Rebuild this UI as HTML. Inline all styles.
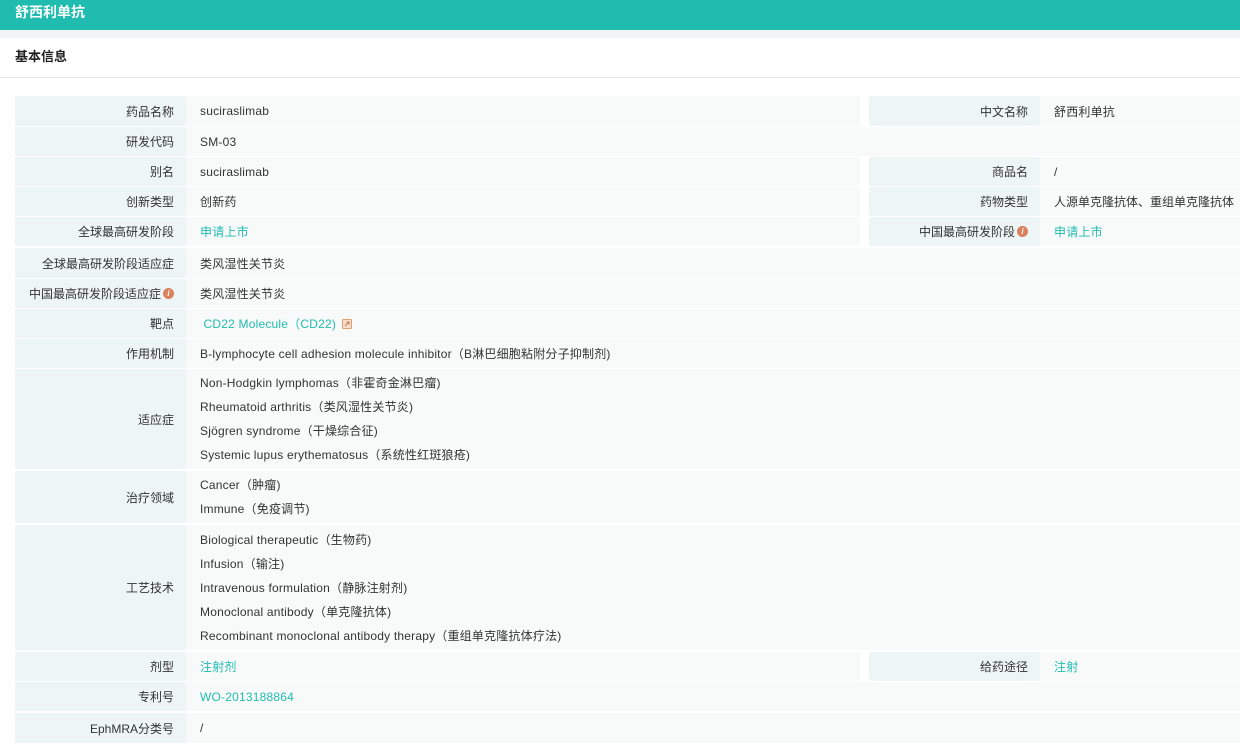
<!DOCTYPE html>
<html><head><meta charset="utf-8"><style>
*{margin:0;padding:0;box-sizing:border-box}
body{width:1240px;height:745px;overflow:hidden;background:#fff;font-family:"Liberation Sans","Noto Sans CJK SC",sans-serif;font-size:12px;color:#333;position:relative}
.top{position:absolute;left:0;top:0;width:1240px;height:30px;background:#20bcb0;color:#fff;font-weight:bold;font-size:14px;line-height:25px;padding-left:15px}
.strip{position:absolute;left:0;top:30px;width:1240px;height:8px;background:#f3f4f6}
.sec{position:absolute;left:0;top:38px;width:1240px;height:40px;border-bottom:1px solid #e8e8e8;font-weight:bold;font-size:13px;line-height:38px;padding-left:15px;color:#222}
.l{position:absolute;background:#eef5f5;text-align:right;padding-right:12px;display:flex;align-items:center;justify-content:flex-end;border-radius:2px;color:#333}
.v{position:absolute;background:#f8fafa;padding-left:14px;color:#333;letter-spacing:0.2px}
.v.c{display:flex;align-items:center}
.v.m{display:flex;flex-direction:column;justify-content:center}
.v.m div{height:24px;line-height:24px}
.a{color:#20bcb0}
.i{display:inline-block;width:11px;height:11px;border-radius:50%;background:#d9825f;color:#fff;font-size:8px;line-height:11px;text-align:center;font-style:italic;margin-left:2px;font-weight:bold;letter-spacing:0}
.ext{display:inline-block;margin-left:6px;vertical-align:middle}
</style></head><body>
<div class="top">舒西利单抗</div>
<div class="strip"></div>
<div class="sec">基本信息</div>

<div class="l" style="left:15px;top:96px;width:171px;height:30px">药品名称</div>
<div class="v c" style="left:186px;top:96px;width:674px;height:30px">suciraslimab</div>
<div class="l" style="left:869px;top:96px;width:171px;height:30px">中文名称</div>
<div class="v c" style="left:1040px;top:96px;width:200px;height:30px">舒西利单抗</div>

<div class="l" style="left:15px;top:127px;width:171px;height:29px">研发代码</div>
<div class="v c" style="left:186px;top:127px;width:1054px;height:29px">SM-03</div>

<div class="l" style="left:15px;top:157px;width:171px;height:29px">别名</div>
<div class="v c" style="left:186px;top:157px;width:674px;height:29px">suciraslimab</div>
<div class="l" style="left:869px;top:157px;width:171px;height:29px">商品名</div>
<div class="v c" style="left:1040px;top:157px;width:200px;height:29px">/</div>

<div class="l" style="left:15px;top:187px;width:171px;height:29px">创新类型</div>
<div class="v c" style="left:186px;top:187px;width:674px;height:29px">创新药</div>
<div class="l" style="left:869px;top:187px;width:171px;height:29px">药物类型</div>
<div class="v c" style="left:1040px;top:187px;width:200px;height:29px;letter-spacing:0">人源单克隆抗体、重组单克隆抗体</div>

<div class="l" style="left:15px;top:217px;width:171px;height:29px">全球最高研发阶段</div>
<div class="v c a" style="left:186px;top:217px;width:674px;height:29px">申请上市</div>
<div class="l" style="left:869px;top:217px;width:171px;height:29px">中国最高研发阶段<span class="i">i</span></div>
<div class="v c a" style="left:1040px;top:217px;width:200px;height:29px">申请上市</div>

<div class="l" style="left:15px;top:248px;width:171px;height:30px">全球最高研发阶段适应症</div>
<div class="v c" style="left:186px;top:248px;width:1054px;height:30px">类风湿性关节炎</div>

<div class="l" style="left:15px;top:279px;width:171px;height:29px">中国最高研发阶段适应症<span class="i">i</span></div>
<div class="v c" style="left:186px;top:279px;width:1054px;height:29px">类风湿性关节炎</div>

<div class="l" style="left:15px;top:309px;width:171px;height:29px">靶点</div>
<div class="v c" style="left:186px;top:309px;width:1054px;height:29px"><span class="a">&nbsp;CD22 Molecule（CD22)</span><svg class="ext" width="10" height="10" viewBox="0 0 10 10"><rect x="0.5" y="0.5" width="9" height="9" rx="1" fill="#f6dccb" stroke="#e0a070"/><path d="M3 7L7 3M4.5 3H7V5.5" stroke="#c8784a" stroke-width="1" fill="none"/></svg></div>

<div class="l" style="left:15px;top:339px;width:171px;height:29px">作用机制</div>
<div class="v c" style="left:186px;top:339px;width:1054px;height:29px">B-lymphocyte cell adhesion molecule inhibitor（B淋巴细胞粘附分子抑制剂)</div>

<div class="l" style="left:15px;top:369px;width:171px;height:100px">适应症</div>
<div class="v m" style="left:186px;top:369px;width:1054px;height:100px"><div>Non-Hodgkin lymphomas（非霍奇金淋巴瘤)</div><div>Rheumatoid arthritis（类风湿性关节炎)</div><div>Sjögren syndrome（干燥综合征)</div><div>Systemic lupus erythematosus（系统性红斑狼疮)</div></div>

<div class="l" style="left:15px;top:471px;width:171px;height:52px">治疗领域</div>
<div class="v m" style="left:186px;top:471px;width:1054px;height:52px"><div>Cancer（肿瘤)</div><div>Immune（免疫调节)</div></div>

<div class="l" style="left:15px;top:525px;width:171px;height:125px">工艺技术</div>
<div class="v m" style="left:186px;top:525px;width:1054px;height:125px"><div>Biological therapeutic（生物药)</div><div>Infusion（输注)</div><div>Intravenous formulation（静脉注射剂)</div><div>Monoclonal antibody（单克隆抗体)</div><div>Recombinant monoclonal antibody therapy（重组单克隆抗体疗法)</div></div>

<div class="l" style="left:15px;top:652px;width:171px;height:29px">剂型</div>
<div class="v c a" style="left:186px;top:652px;width:674px;height:29px">注射剂</div>
<div class="l" style="left:869px;top:652px;width:171px;height:29px">给药途径</div>
<div class="v c a" style="left:1040px;top:652px;width:200px;height:29px">注射</div>

<div class="l" style="left:15px;top:682px;width:171px;height:29px">专利号</div>
<div class="v c a" style="left:186px;top:682px;width:1054px;height:29px">WO-2013188864</div>

<div class="l" style="left:15px;top:713px;width:171px;height:30px">EphMRA分类号</div>
<div class="v c" style="left:186px;top:713px;width:1054px;height:30px">/</div>
</body></html>
